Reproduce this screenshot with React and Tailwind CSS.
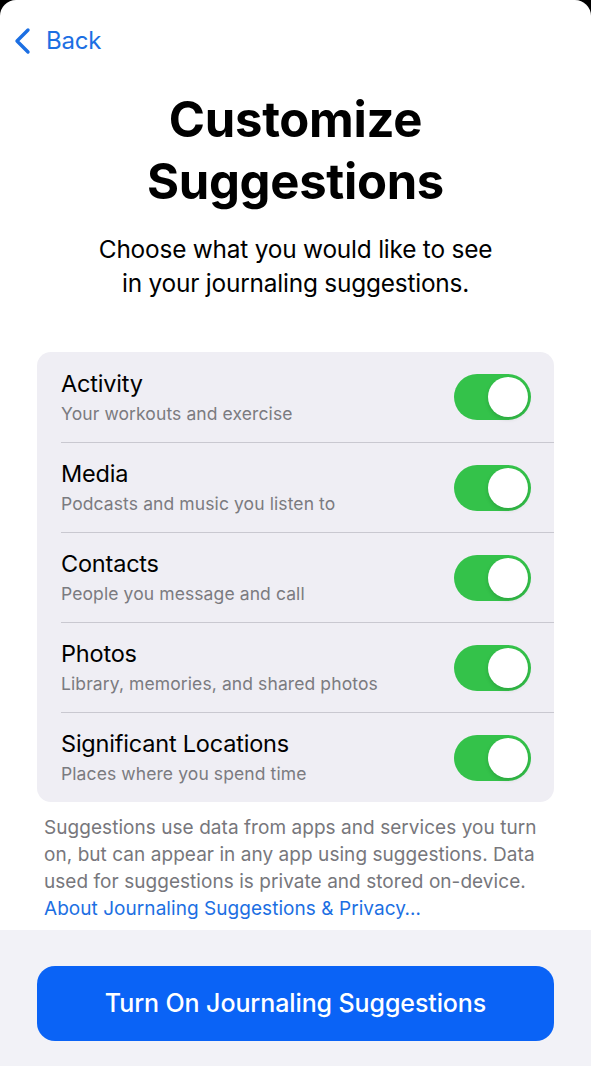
import React from "react";

const rows = [
  ["Activity", "Your workouts and exercise"],
  ["Media", "Podcasts and music you listen to"],
  ["Contacts", "People you message and call"],
  ["Photos", "Library, memories, and shared photos"],
  ["Significant Locations", "Places where you spend time"],
];

function Toggle() {
  return (
    <div className="w-[77px] h-[46px] rounded-full bg-[#34c24a] flex items-center justify-end px-[3px] shrink-0">
      <div className="w-[40px] h-[40px] rounded-full bg-white shadow-[0_2px_4px_rgba(0,0,0,0.15)]" />
    </div>
  );
}

export default function App() {
  return (
    <div className="w-[591px] h-[1066px] bg-black overflow-hidden" style={{ fontFamily: "Inter, 'Noto Sans', sans-serif" }}>
      <div className="h-full bg-white rounded-t-[16px] flex flex-col">
        <div className="h-[80px] flex items-center pl-[13px] pt-[1px]">
          <svg width="20" height="28" viewBox="0 0 20 28" className="mr-[13px]">
            <path d="M15 3 L4 14 L15 25" fill="none" stroke="#1c6fe3" strokeWidth="3.4" strokeLinecap="round" strokeLinejoin="round" />
          </svg>
          <span className="text-[24px] text-[#1c6fe3] tracking-[-0.2px]">Back</span>
        </div>
        <h1 className="mt-[9px] text-center text-[49px] leading-[62px] font-bold text-black tracking-[-0.3px]">
          Customize
          <br />
          Suggestions
        </h1>
        <p className="mt-[19px] text-center text-[24.4px] leading-[34px] text-black tracking-[-0.2px]">
          Choose what you would like to see
          <br />
          in your journaling suggestions.
        </p>
        <div className="mt-[52px] mx-[37px] rounded-[14px] bg-[#efeef4] overflow-hidden">
          {rows.map(([t, s], i) => (
            <div key={t} className="h-[90px] flex items-center pl-[24px]">
              <div className={"flex-1 h-full flex items-center pr-[23px] " + (i > 0 ? "border-t border-[#c9c8d0]" : "")}>
                <div className="flex-1 flex flex-col pt-[3px]">
                  <span className="text-[23.5px] leading-[30px] text-black tracking-[-0.2px]">{t}</span>
                  <span className="text-[17.5px] leading-[30px] text-[#7b7b80] tracking-[0.1px]">{s}</span>
                </div>
                <Toggle />
              </div>
            </div>
          ))}
        </div>
        <p className="mt-[12px] mx-[44px] text-[19px] leading-[27px] text-[#77777c] tracking-[0.05px]">
          Suggestions use data from apps and services you turn on, but can appear in any app using suggestions. Data used for suggestions is private and stored on-device.
          <br />
          <span className="text-[#1c6fe3]">About Journaling Suggestions &amp; Privacy…</span>
        </p>
        <div className="mt-[8px] flex-1 bg-[#f2f2f7] pt-[36px] px-[37px]">
          <button className="w-full h-[75px] rounded-[18px] bg-[#0a63f6] text-white text-[25px] font-medium tracking-[-0.1px]">
            Turn On Journaling Suggestions
          </button>
        </div>
      </div>
    </div>
  );
}
